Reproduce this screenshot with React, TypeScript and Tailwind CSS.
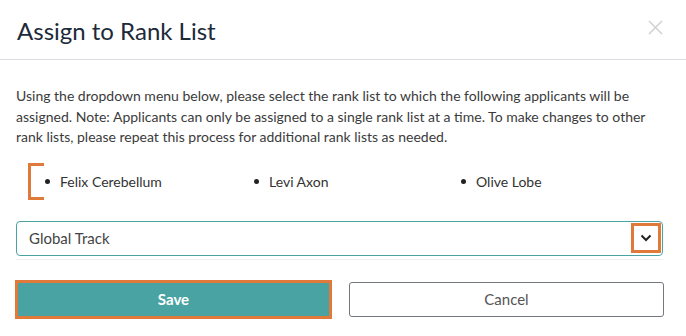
import React from 'react';

const names = ['Felix Cerebellum', 'Levi Axon', 'Olive Lobe'];

const App: React.FC = () => {
  return (
    <div className="w-[686px] h-[336px] bg-white overflow-hidden" style={{ fontFamily: 'Lato, "Open Sans", sans-serif' }}>
      {/* Header */}
      <div className="h-[60px] flex items-center justify-between pl-[17px] pr-[23px] border-b border-[#dcdce3]">
        <h2 className="text-[24px] text-[#1c2a3a] mt-[3px]">Assign to Rank List</h2>
        <svg width="15" height="15" viewBox="0 0 15 15" className="mt-[-4px]">
          <path d="M1 1 L14 14 M14 1 L1 14" stroke="#d2d2d5" strokeWidth="1.6" />
        </svg>
      </div>

      {/* Body */}
      <div className="px-[16px] pt-[26px]">
        <p className="text-[14px] leading-[20.5px] text-[#3b3b3b] w-[650px]">
          Using the dropdown menu below, please select the rank list to which the following applicants will be
          assigned. Note: Applicants can only be assigned to a single rank list at a time. To make changes to other
          rank lists, please repeat this process for additional rank lists as needed.
        </p>

        <div className="relative mt-[15px] ml-[12px] h-[37px] flex items-center">
          <div className="absolute left-0 top-0 w-[16px] h-[37px] border-l-[3px] border-t-[3px] border-b-[3px] border-[#e07a3a]" />
          <ul className="grid grid-cols-[209px_207px_160px] pl-[17px] text-[14px] text-[#333]">
            {names.map((n) => (
              <li key={n} className="flex items-center">
                <span className="w-[5px] h-[5px] rounded-full bg-[#222] mr-[10px]" />
                {n}
              </li>
            ))}
          </ul>
        </div>

        {/* Select */}
        <div className="mt-[21px] pb-[3px] border-b border-[#f0f0f2] w-[647px]">
          <div className="h-[35px] w-[647px] border border-[#4aa3a3] rounded-[4px] flex items-center justify-between pl-[12px] pr-[1px]">
            <span className="text-[15px] text-[#444]">Global Track</span>
            <div className="w-[30px] h-[30px] border-[3px] border-[#e07a3a] flex items-center justify-center">
              <svg width="12" height="8" viewBox="0 0 12 8">
                <path d="M1.5 1.5 L6 6 L10.5 1.5" stroke="#222" strokeWidth="2" fill="none" />
              </svg>
            </div>
          </div>
        </div>

        {/* Buttons */}
        <div className="mt-[20px] flex items-center ml-[-1px] gap-[17px]">
          <button className="w-[317px] h-[39px] bg-[#4aa3a3] border-[3px] border-[#e07a3a] text-white text-[15px] font-bold">
            Save
          </button>
          <button className="w-[315px] h-[35px] bg-white border border-[#73787e] rounded-[3px] text-[#555] text-[15px]">
            Cancel
          </button>
        </div>
      </div>
    </div>
  );
};

export default App;
